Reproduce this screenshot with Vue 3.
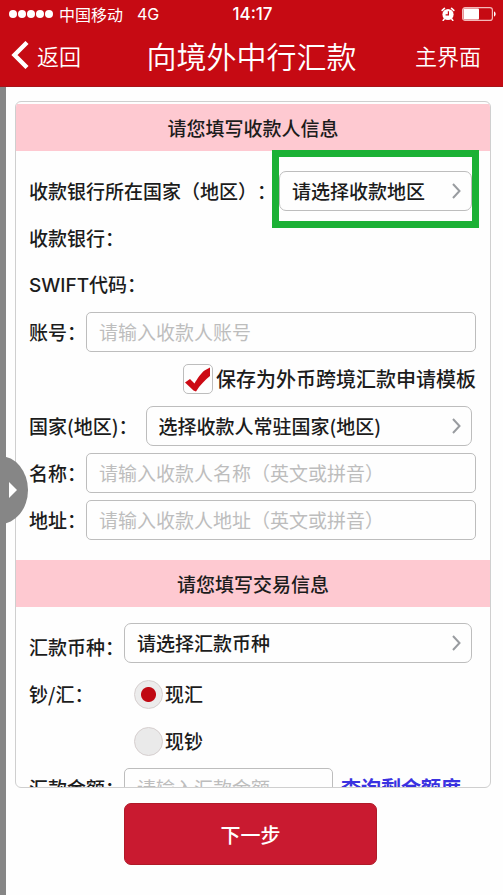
<script setup>
import { ref } from 'vue'

const region = ref('')
const country = ref('')
const currency = ref('')
const account = ref('')
const name = ref('')
const address = ref('')
const amount = ref('')
const saveTemplate = ref(true)
const cashType = ref('remit')
</script>

<template>
  <div class="page">
    <header class="top">
      <div class="status">
        <div class="carrier">
          <span class="dots"><i v-for="n in 5" :key="n"></i></span>
          <span>中国移动</span>
          <span class="net">4G</span>
        </div>
        <span class="time">14:17</span>
        <div class="indicators">
          <svg class="alarm" viewBox="0 0 14 14" aria-hidden="true">
            <circle cx="7" cy="7.5" r="5.6" fill="#fff" />
            <path d="M1.2 3.4 3.4 1.4M12.8 3.4 10.6 1.4M3.2 12 2.2 13.4M10.8 12l1 1.4" stroke="#fff" stroke-width="1.6" stroke-linecap="round" />
            <path d="M7.4 4.2v3.7H4.6" fill="none" stroke="#c60a13" stroke-width="1.2" />
          </svg>
          <svg class="battery" viewBox="0 0 34 14" aria-hidden="true">
            <rect x="0.6" y="0.6" width="29.8" height="12.8" rx="2.5" fill="none" stroke="#f3b9b9" stroke-width="1.2" />
            <rect x="1.5" y="1.5" width="15.5" height="11" rx="1" fill="#fff" />
            <path d="M32 4.5c2.2.6 2.2 4.4 0 5z" fill="#fff" />
          </svg>
        </div>
      </div>
      <nav class="nav">
        <a class="back" href="#back">
          <svg viewBox="0 0 18 28" aria-hidden="true"><path d="M16 1.5 3.5 14 16 26.5" fill="none" stroke="#fff" stroke-width="4.4" /></svg>
          返回
        </a>
        <h1>向境外中行汇款</h1>
        <a class="home" href="#home">主界面</a>
      </nav>
    </header>

    <main class="content">
      <button class="drawer" type="button" aria-label="展开">
        <svg viewBox="0 0 8 16" aria-hidden="true"><path d="M0 0 8 8 0 16z" fill="#fff" /></svg>
      </button>

      <form class="form" @submit.prevent>
        <div class="card">
          <h2>请您填写收款人信息</h2>
          <div class="fields">
            <div class="row">
              <label for="region">收款银行所在国家（地区）：</label>
              <div class="picker near marked">
                <select id="region" v-model="region"><option value="">请选择收款地区</option></select>
                <svg viewBox="0 0 9 16" aria-hidden="true"><path d="M1 1l6.5 7L1 15" /></svg>
              </div>
            </div>
            <div class="row"><span>收款银行：</span></div>
            <div class="row"><span><span class="latin">SWIFT</span>代码：</span></div>
            <div class="row">
              <label for="account">账号：</label>
              <input id="account" v-model="account" class="text" type="text" placeholder="请输入收款人账号">
            </div>
            <div class="row end">
              <label class="option save">
                <input v-model="saveTemplate" class="check" type="checkbox">
                <svg v-if="saveTemplate" class="tick" viewBox="0 0 30 30" aria-hidden="true">
                  <path d="M2 18.5 7 15 11.5 19.5C14.5 14.5 18 9 21.5 6.5L27 3.5V12C22.5 15.5 17 21 13 27.5L10.5 26.5z" fill="#cc0a14" />
                </svg>
                保存为外币跨境汇款申请模板
              </label>
            </div>
            <div class="row">
              <label for="country">国家(地区)：</label>
              <div class="picker far">
                <select id="country" v-model="country"><option value="">选择收款人常驻国家(地区)</option></select>
                <svg viewBox="0 0 9 16" aria-hidden="true"><path d="M1 1l6.5 7L1 15" /></svg>
              </div>
            </div>
            <div class="row">
              <label for="name">名称：</label>
              <input id="name" v-model="name" class="text" type="text" placeholder="请输入收款人名称（英文或拼音）">
            </div>
            <div class="row">
              <label for="address">地址：</label>
              <input id="address" v-model="address" class="text" type="text" placeholder="请输入收款人地址（英文或拼音）">
            </div>
          </div>

          <h2>请您填写交易信息</h2>
          <div class="fields deal">
            <div class="row tall">
              <label for="currency">汇款币种：</label>
              <div class="picker">
                <select id="currency" v-model="currency"><option value="">请选择汇款币种</option></select>
                <svg viewBox="0 0 9 16" aria-hidden="true"><path d="M1 1l6.5 7L1 15" /></svg>
              </div>
            </div>
            <div class="row">
              <span class="lead">钞/汇：</span>
              <label class="option"><input v-model="cashType" class="radio" type="radio" name="cash" value="remit">现汇</label>
            </div>
            <div class="row">
              <span class="lead"></span>
              <label class="option"><input v-model="cashType" class="radio" type="radio" name="cash" value="cash">现钞</label>
            </div>
            <div class="row">
              <label for="amount">汇款金额：</label>
              <input id="amount" v-model="amount" class="text" type="text" placeholder="请输入汇款金额">
              <a class="quota" href="#quota">查询剩余额度</a>
            </div>
          </div>
        </div>
        <button class="next" type="submit">下一步</button>
      </form>
    </main>
  </div>
</template>

<style>
body {
  background: #fefefe;
}
</style>

<style scoped>
* {
  box-sizing: border-box;
}
.page {
  display: flex;
  flex-direction: column;
  height: 100vh;
  background: #fefefe;
  color: #1c1c1c;
  font-family: "Noto Sans CJK SC", sans-serif;
  font-size: 19px;
  font-weight: 500;
  text-spacing-trim: space-all;
}
.top {
  flex: none;
  background: #c60a13;
  border-bottom: 1px solid #a8141a;
  color: #fff;
}
.status {
  display: grid;
  grid-template-columns: 1fr auto 1fr;
  align-items: center;
  height: 28px;
  padding: 0 7px 0 9px;
  font-size: 16px;
  font-weight: 400;
  line-height: 28px;
}
.carrier {
  display: flex;
  align-items: center;
  gap: 6px;
}
.dots {
  display: flex;
  gap: 1px;
}
.dots i {
  width: 8px;
  height: 8px;
  border-radius: 50%;
  background: #fff;
}
.net {
  margin-left: 8px;
  font-family: Inter, sans-serif;
}
.time {
  font-family: Inter, sans-serif;
  font-size: 17px;
  font-weight: 500;
}
.indicators {
  display: flex;
  align-items: center;
  justify-content: flex-end;
  gap: 7px;
}
.alarm {
  width: 14px;
  height: 14px;
}
.battery {
  width: 34px;
  height: 14px;
}
.nav {
  display: grid;
  grid-template-columns: 1fr auto 1fr;
  align-items: center;
  height: 58px;
  padding: 0 11px 4px;
  font-size: 22px;
  font-weight: 350;
}
.nav a {
  color: #fff;
  text-decoration: none;
}
.back {
  display: flex;
  align-items: center;
  gap: 8px;
}
.back svg {
  width: 18px;
  height: 28px;
}
.home {
  justify-self: end;
  margin-right: 11px;
}
h1 {
  margin: 0;
  font-size: 30px;
  font-weight: 350;
  line-height: 40px;
}
.content {
  position: relative;
  display: flex;
  flex: 1;
  min-height: 0;
  border-left: 6px solid #868686;
}
.drawer {
  position: absolute;
  top: 50%;
  left: -6px;
  z-index: 1;
  display: flex;
  align-items: center;
  width: 34px;
  height: 68px;
  margin-top: -35px;
  padding: 0 0 0 15px;
  border: 0;
  border-radius: 0 28px 28px 0 / 0 34px 34px 0;
  background: #868686;
  left: -12px;
}
.drawer svg {
  width: 8px;
  height: 16px;
}
.form {
  display: flex;
  flex: 1;
  flex-direction: column;
  align-items: center;
  min-width: 0;
  padding: 14px 12px 30px 9px;
}
.card {
  flex: 1;
  align-self: stretch;
  min-height: 0;
  overflow: auto;
  scrollbar-width: none;
  padding-top: 2px;
  border: 1px solid #cfcfcf;
  border-radius: 6px;
}
h2 {
  margin: 0;
  background: #fec9d1;
  font-size: 19px;
  font-weight: 500;
  line-height: 47px;
  text-align: center;
}
.fields {
  display: flex;
  flex-direction: column;
  gap: 7px;
  padding: 20px 14px 20px 13px;
}
.deal {
  padding-top: 16px;
}
.row {
  display: flex;
  align-items: center;
  height: 40px;
  line-height: 40px;
  white-space: nowrap;
}
.latin {
  font-family: Inter, sans-serif;
}
.end {
  justify-content: flex-end;
}
.tall {
  align-items: flex-start;
  height: 44px;
}
.tall label {
  align-self: flex-end;
}
.picker {
  position: relative;
  flex: 1;
  min-width: 0;
  height: 40px;
  margin-right: 4px;
}
.near {
  margin-left: 3px;
}
.far {
  margin-left: 8px;
}
.marked::after {
  content: "";
  position: absolute;
  inset: -21px -7px -17px;
  border: 7px solid #1bb135;
  pointer-events: none;
}
select,
.text {
  display: block;
  width: 100%;
  height: 40px;
  border: 1px solid #bdbdbd;
  border-radius: 7px;
  background: #fefefe;
  color: #1c1c1c;
  font: inherit;
  line-height: normal;
  outline: 0;
}
select {
  appearance: none;
  padding: 0 28px 2px 12px;
}
.picker svg {
  position: absolute;
  top: 12px;
  right: 11px;
  width: 9px;
  height: 16px;
  fill: none;
  stroke: #999ca0;
  stroke-width: 2;
  pointer-events: none;
}
.text {
  flex: 1;
  min-width: 0;
  padding: 0 12px 2px;
  border-radius: 5px;
}
.text::placeholder {
  color: #bdbdbd;
  font-weight: 400;
  opacity: 1;
}
.option {
  position: relative;
  display: flex;
  align-items: center;
  gap: 2px;
}
.save {
  gap: 3px;
  font-size: 20px;
}
.check,
.radio {
  appearance: none;
  flex: none;
  margin: 0;
  border: 1px solid #bdbdbd;
}
.check {
  width: 30px;
  height: 30px;
  border-radius: 5px;
}
.tick {
  position: absolute;
  left: 0;
  width: 30px;
  height: 30px;
  pointer-events: none;
}
.radio {
  width: 29px;
  height: 29px;
  border-color: #d6cfcf;
  border-radius: 50%;
  background: #eaeaea;
}
.radio:checked {
  background: radial-gradient(circle, #c00a14 7px, #ececec 8px);
}
.lead {
  width: 105px;
}
.quota {
  margin: 0 15px 0 8px;
  color: #3a32e0;
  font-size: 20px;
  font-weight: 700;
  text-decoration: none;
}
.next {
  flex: none;
  width: 53%;
  height: 62px;
  margin: 15px 5px 0 0;
  border: 1px solid #b01a28;
  border-radius: 7px;
  background: #c91a30;
  color: #fff;
  font: inherit;
  font-size: 20px;
}
</style>
